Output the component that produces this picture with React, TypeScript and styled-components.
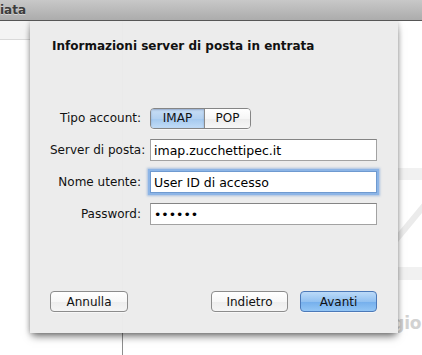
import React from 'react';
import styled, { createGlobalStyle, css } from 'styled-components';

const Global = createGlobalStyle`
  html, body { margin: 0; padding: 0; background: #fff; }
  body {
    width: 422px; height: 355px; overflow: hidden;
    font-family: "DejaVu Sans", "Liberation Sans", sans-serif;
  }
  #root { width: 422px; height: 355px; }
`;

const Window = styled.div`
  display: flex;
  flex-direction: column;
  width: 422px;
  height: 355px;
  background: #fff;
`;

const TitleBar = styled.div`
  flex: none;
  height: 20px;
  border-bottom: 1px solid #565656;
  background: linear-gradient(#c8c8c8, #acacac);
  display: flex;
  align-items: center;
  font-size: 12px;
  font-weight: bold;
  color: #3c3c3c;
  text-shadow: 0 1px 0 rgba(255, 255, 255, 0.45);
  white-space: nowrap;
  overflow: hidden;
`;

const Content = styled.div`
  flex: 1;
  display: grid;
  grid-template: 1fr / 1fr;
  min-height: 0;
  overflow: hidden;
`;

const Panes = styled.div`
  grid-area: 1 / 1;
  display: flex;
  min-width: 0;
`;

const ListPane = styled.div`
  width: 122px;
  flex: none;
  border-right: 1px solid #8e8e8e;
  display: flex;
  flex-direction: column;
`;

const ListHeader = styled.div`
  height: 18px;
  background: #f4f4f4;
  border-bottom: 1px solid #dadada;
`;

const PreviewPane = styled.div`
  flex: 1;
  min-width: 0;
  display: grid;
  grid-template: 1fr / 1fr;
`;

const Watermark = styled.svg`
  grid-area: 1 / 1;
  width: 299px;
  height: 334px;
`;

const EmptyText = styled.div`
  grid-area: 1 / 1;
  align-self: end;
  margin: 0 0 22px 124px;
  font-size: 17px;
  font-weight: bold;
  color: #d2d2d2;
  white-space: nowrap;
  letter-spacing: -0.3px;
`;

const Sheet = styled.div`
  grid-area: 1 / 1;
  align-self: start;
  justify-self: start;
  margin-left: 30px;
  width: 368px;
  height: 312px;
  box-sizing: border-box;
  padding: 17px 21px 21px 20px;
  background: rgba(236, 236, 236, 0.985);
  box-shadow: 0 5px 8px -2px rgba(0, 0, 0, 0.55), 0 0 5px rgba(0, 0, 0, 0.22);
  display: flex;
  flex-direction: column;
`;

const SheetTitle = styled.div`
  padding-left: 2px;
  font-size: 12px;
  line-height: 16px;
  font-weight: bold;
  color: #111;
`;

const Form = styled.div`
  margin-top: 53px;
  display: grid;
  grid-template-columns: 91px 227px;
  grid-auto-rows: 22px;
  column-gap: 9px;
  row-gap: 10px;
`;

const Label = styled.label`
  align-self: center;
  text-align: right;
  font-size: 12px;
  color: #111;
  white-space: nowrap;
`;

const Segmented = styled.div`
  justify-self: start;
  align-self: center;
  display: flex;
  height: 21px;
  box-sizing: border-box;
  border: 1px solid #858585;
  border-radius: 4px;
  overflow: hidden;
  box-shadow: 0 1px 0 rgba(255, 255, 255, 0.6);
`;

const Segment = styled.div<{ $active?: boolean; $w: number }>`
  width: ${p => p.$w}px;
  display: flex;
  align-items: center;
  justify-content: center;
  font-size: 12px;
  color: #111;
  & + & { border-left: 1px solid #8a8a8a; }
  ${p =>
    p.$active
      ? css`
          background: linear-gradient(#c9def4, #b3d1f0 50%, #a3c8ee 51%, #c1dcf7);
          box-shadow: inset 0 1px 2px rgba(40, 70, 120, 0.35);
        `
      : css`
          background: linear-gradient(#ffffff, #f6f6f6 50%, #ececec 51%, #f7f7f7);
        `}
`;

const Field = styled.input<{ $focused?: boolean }>`
  box-sizing: border-box;
  width: 227px;
  height: 22px;
  margin: 0;
  padding: 0 3px;
  border: 1px solid #a2a2a2;
  border-top-color: #848484;
  background: #fff;
  font-family: "DejaVu Sans", "Liberation Sans", sans-serif;
  font-size: 12.5px;
  color: #000;
  outline: none;
  ${p =>
    p.$focused &&
    css`
      border-color: #6f9ad0;
      box-shadow: 0 0 0 2px #8db5e6, 0 0 2px 3px rgba(120, 160, 215, 0.6);
    `}
`;

const Footer = styled.div`
  margin-top: auto;
  display: flex;
  align-items: center;
  gap: 12px;
`;

const Spacer = styled.div`
  flex: 1;
`;

const Button = styled.button<{ $primary?: boolean; $w: number }>`
  width: ${p => p.$w}px;
  height: 21px;
  box-sizing: border-box;
  margin: 0;
  padding: 0;
  border: 1px solid #8c8c8c;
  border-radius: 4px;
  font-family: "DejaVu Sans", "Liberation Sans", sans-serif;
  font-size: 12px;
  color: #111;
  background: linear-gradient(#ffffff, #f7f7f7 50%, #ededed 51%, #f5f5f5);
  box-shadow: 0 1px 0 rgba(255, 255, 255, 0.6);
  ${p =>
    p.$primary &&
    css`
      border-color: #4c79b8;
      background: linear-gradient(#bcdaf8, #92c1f1 50%, #74aeec 51%, #93c6f5);
    `}
`;

export default function App() {
  return (
    <Window>
      <Global />
      <TitleBar>iata</TitleBar>
      <Content>
        <Panes>
          <ListPane>
            <ListHeader />
          </ListPane>
          <PreviewPane>
            <Watermark viewBox="0 0 299 334">
              <rect x="160" y="147" width="160" height="12" fill="#f1f1f1" />
              <rect x="160" y="246" width="160" height="13" fill="#f1f1f1" />
              <line x1="262" y1="232" x2="305" y2="180" stroke="#ebebeb" strokeWidth="6" />
            </Watermark>
            <EmptyText>Nessun messaggio</EmptyText>
          </PreviewPane>
        </Panes>
        <Sheet>
          <SheetTitle>Informazioni server di posta in entrata</SheetTitle>
          <Form>
            <Label>Tipo account:</Label>
            <Segmented>
              <Segment $active $w={53}>IMAP</Segment>
              <Segment $w={45}>POP</Segment>
            </Segmented>
            <Label>Server di posta:</Label>
            <Field readOnly defaultValue="imap.zucchettipec.it" />
            <Label>Nome utente:</Label>
            <Field readOnly $focused defaultValue="User ID di accesso" />
            <Label>Password:</Label>
            <Field readOnly type="password" defaultValue="secret" />
          </Form>
          <Footer>
            <Button $w={78}>Annulla</Button>
            <Spacer />
            <Button $w={77}>Indietro</Button>
            <Button $w={77} $primary>Avanti</Button>
          </Footer>
        </Sheet>
      </Content>
    </Window>
  );
}
